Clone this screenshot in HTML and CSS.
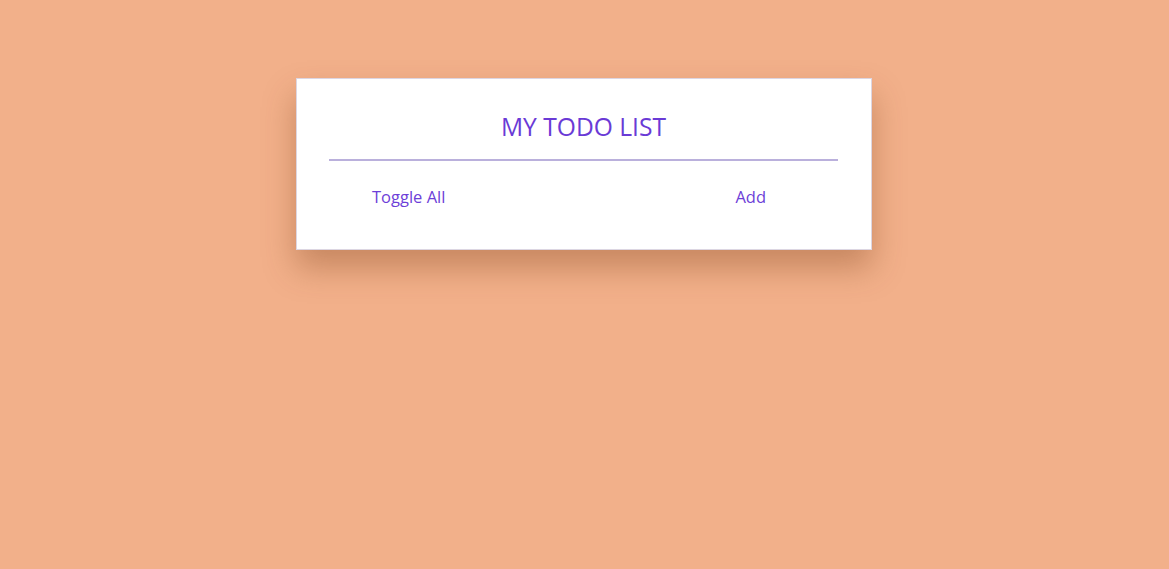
FILE: index.html
```html
<!DOCTYPE html>
<html lang="en">
<head>
<meta charset="utf-8">
<title>My Todo List</title>
<link rel="stylesheet" href="styles.css">
</head>
<body>
<main class="page">
  <section class="card">
    <h1 class="title">MY TODO LIST</h1>
    <div class="actions">
      <button class="btn btn-toggle">Toggle All</button>
      <button class="btn btn-add">Add</button>
    </div>
  </section>
</main>
</body>
</html>
```
FILE: styles.css
```css
html, body {
  margin: 0;
  padding: 0;
  height: 100%;
}
body {
  background: #f2b08a;
  font-family: "Open Sans", "Noto Sans", sans-serif;
}
.page {
  display: flex;
  justify-content: center;
  padding-top: 78px;
}
.card {
  width: 509px;
  margin-left: -1px;
  background: #ffffff;
  border: 1px solid #dcd6e2;
  padding: 0 33px 0 32px;
  height: 170px;
  box-shadow: 0 18px 30px rgba(120, 60, 20, 0.35);
}
.title {
  margin: 0;
  padding-top: 31px;
  padding-bottom: 15px;
  text-align: center;
  font-weight: 400;
  font-size: 24.6px;
  line-height: 34px;
  color: #6a3ad6;
  border-bottom: 2px solid #bab0dc;
}
.actions {
  display: flex;
  justify-content: space-between;
  padding: 24px 72px 0 43px;
}
.btn {
  background: none;
  border: none;
  padding: 0;
  font-family: "Open Sans", "Noto Sans", sans-serif;
  font-size: 16.5px;
  line-height: 24px;
  color: #6d3fd8;
  cursor: pointer;
}
```
